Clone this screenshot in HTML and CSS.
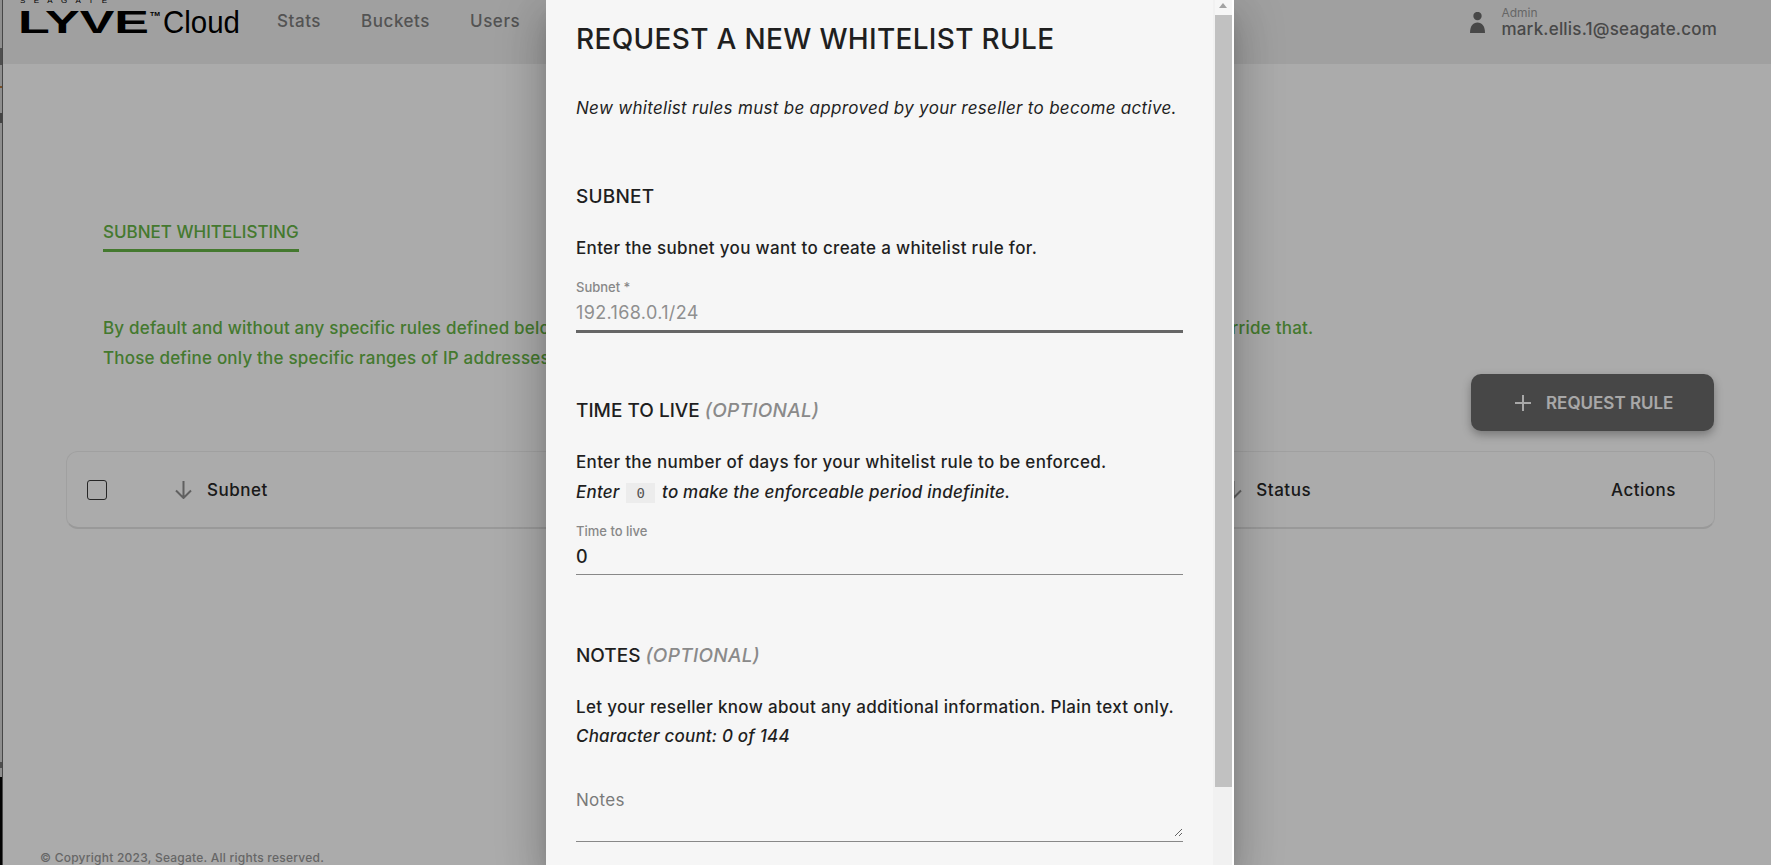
FILE: index.html
```html
<!DOCTYPE html>
<html lang="en">
<head>
<meta charset="utf-8">
<title>Lyve Cloud - Subnet whitelisting</title>
<link rel="stylesheet" href="styles.css">
</head>
<body>
<div class="edge"><div class="edge-top"></div><div class="edge-bottom"></div></div>
<div class="page">
  <header class="topbar">
    <svg class="logo" width="224" height="36" viewBox="0 0 224 36" aria-label="Seagate Lyve Cloud">
      <text class="logo-seagate" x="0" y="3" textLength="87" lengthAdjust="spacing">SEAGATE</text>
      <text class="logo-lyve" x="-2" y="33" textLength="131" lengthAdjust="spacingAndGlyphs">LYVE</text>
      <text class="logo-tm" x="130" y="16" textLength="10" lengthAdjust="spacingAndGlyphs">TM</text>
      <text class="logo-cloud" x="143" y="33" textLength="77" lengthAdjust="spacingAndGlyphs">Cloud</text>
    </svg>
    <nav class="nav">
      <a class="nav-item">Stats</a>
      <a class="nav-item">Buckets</a>
      <a class="nav-item">Users</a>
    </nav>
    <div class="user">
      <svg class="user-icon" width="15" height="21" viewBox="0 0 15 21"><circle cx="7.5" cy="4" r="4.2"/><path d="M0 21C0 14 3 10.500 7.500 10.500S15 14 15 21Z"/></svg>
      <div class="user-text">
        <div class="user-role">Admin</div>
        <div class="user-mail">mark.ellis.1@seagate.com</div>
      </div>
    </div>
  </header>
  <main class="content">
    <div class="tab">SUBNET WHITELISTING</div>
    <p class="intro">By default and without any specific rules defined below, all IP addresses are allowed to access your storage. Whitelist rules you add override that.<br>Those define only the specific ranges of IP addresses that can reach your buckets.</p>
    <div class="actions"><button class="request-btn" type="button"><svg class="plus" width="16" height="16" viewBox="0 0 16 16"><path d="M8 0V16M0 8H16"/></svg>REQUEST RULE</button></div>
    <div class="table">
      <span class="checkbox"></span>
      <svg class="sort" width="17" height="18" viewBox="0 0 17 18"><path d="M8.500 0V17M1 9.500L8.500 17L16 9.500"/></svg>
      <span class="th">Subnet</span>
      <svg class="sort sort-status" width="17" height="18" viewBox="0 0 17 18"><path d="M8.500 0V17M1 9.500L8.500 17L16 9.500"/></svg>
      <span class="th th-status">Status</span>
      <span class="th">Actions</span>
    </div>
  </main>
  <footer class="footer">© Copyright 2023, Seagate. All rights reserved.</footer>
</div>
<div class="overlay">
  <section class="modal">
    <div class="modal-body">
      <h1 class="modal-title">REQUEST A NEW WHITELIST RULE</h1>
      <p class="lead">New whitelist rules must be approved by your reseller to become active.</p>
      <h2 class="section section-first">SUBNET</h2>
      <p class="text">Enter the subnet you want to create a whitelist rule for.</p>
      <label class="field-label">Subnet *</label>
      <input class="field field-strong" type="text" placeholder="192.168.0.1/24">
      <h2 class="section">TIME TO LIVE <em class="optional">(OPTIONAL)</em></h2>
      <p class="text">Enter the number of days for your whitelist rule to be enforced.</p>
      <p class="text text-italic">Enter <code class="chip">0</code> to make the enforceable period indefinite.</p>
      <label class="field-label">Time to live</label>
      <input class="field" type="text" value="0">
      <h2 class="section section-notes">NOTES <em class="optional">(OPTIONAL)</em></h2>
      <p class="text">Let your reseller know about any additional information. Plain text only.</p>
      <p class="text text-italic text-count">Character count: 0 of 144</p>
      <div class="notes"><textarea class="notes-input" placeholder="Notes"></textarea></div>
    </div>
    <div class="scrollbar">
      <div class="scroll-up"></div>
      <div class="scroll-thumb"></div>
    </div>
  </section>
</div>
</body>
</html>
```
FILE: styles.css
```css
* { box-sizing: border-box; }
html, body { height: 100%; }
body {
  margin: 0;
  display: flex;
  height: 865px;
  overflow: hidden;
  background: #fff;
  color: #272727;
  font-family: Inter, "Noto Sans", sans-serif;
  font-size: 17px;
}
.edge {
  width: 3px;
  flex: none;
  display: flex;
  flex-direction: column;
  border-right: 1px solid #6b6b6b;
}
.edge-top {
  flex: 1;
  background:
    linear-gradient(#777, #777) 0 48px / 2px 17px no-repeat,
    linear-gradient(#b5793f, #b5793f) 0 86px / 2px 2px no-repeat,
    linear-gradient(#666, #666) 0 113px / 2px 10px no-repeat,
    linear-gradient(#777, #777) 0 762px / 2px 6px no-repeat,
    #d4d4d4;
}
.edge-bottom { height: 88px; background: #050505; }
.page {
  flex: 1;
  min-width: 0;
  display: flex;
  flex-direction: column;
  height: 865px;
}
.topbar {
  height: 64px;
  flex: none;
  display: flex;
  background: #efefef;
  padding-left: 17px;
  padding-right: 54px;
}
.logo { flex: none; overflow: visible; fill: #000; }
.logo-seagate { font: 400 8px "Liberation Sans", sans-serif; }
.logo-lyve { font: 700 32px "Liberation Sans", sans-serif; }
.logo-tm { font: 700 6px "Liberation Sans", sans-serif; }
.logo-cloud { font: 400 32px "Liberation Sans", sans-serif; }
.nav { display: flex; gap: 40px; margin-left: 33px; height: 42px; align-items: center; }
.nav-item { color: #7d7d7d; font-weight: 500; font-size: 17px; letter-spacing: .55px; }
.user { display: flex; margin-left: auto; }
.user-icon { fill: #6c6c6c; margin: 12px 16px 0 0; flex: none; }
.user-text { padding-top: 6px; }
.user-role { font-size: 12px; line-height: 13px; color: #999; }
.user-mail { font-size: 17px; line-height: 20px; font-weight: 500; color: #6c6c6c; letter-spacing: .2px; }
.content { display: flex; flex-direction: column; }
.tab {
  align-self: flex-start;
  margin: 156px 0 0 100px;
  padding-bottom: 5px;
  border-bottom: 3px solid #66b546;
  line-height: 24px;
  font-weight: 500;
  font-size: 17px;
  color: #66b546;
}
.intro {
  margin: 61px 0 0 100px;
  width: 1300px;
  line-height: 30px;
  font-weight: 500;
  font-size: 17px;
  letter-spacing: .2px;
  color: #66b546;
}
.actions { display: flex; justify-content: flex-end; margin: 1px 57px 0 0; }
.request-btn {
  width: 243px;
  height: 57px;
  display: flex;
  align-items: center;
  padding: 0 0 0 44px;
  gap: 15px;
  border: 0;
  border-radius: 10px;
  background: #6b6b6b;
  color: #fbfbfb;
  font: 600 17px Inter, sans-serif;
  box-shadow: 0 4px 10px rgba(0, 0, 0, .3);
}
.plus { stroke: #fbfbfb; stroke-width: 2; fill: none; flex: none; }
.table {
  margin: 20px 56px 0 63px;
  height: 78px;
  display: flex;
  align-items: center;
  padding: 0 38px 0 20px;
  border: 1px solid #efefef;
  border-bottom: 2px solid #e4e4e4;
  border-radius: 12px;
}
.checkbox {
  width: 20px;
  height: 20px;
  flex: none;
  border: 1px solid #3a3a3a;
  border-radius: 3px;
  margin-right: 68px;
}
.sort { stroke: #909090; stroke-width: 2; fill: none; flex: none; margin-right: 15px; }
.sort-status { margin-left: auto; margin-right: 14px; }
.th { font-weight: 500; font-size: 17px; letter-spacing: .5px; color: #272727; }
.th-status { margin-right: 300px; }
.footer {
  margin-top: auto;
  padding-left: 37px;
  line-height: 15px;
  font-size: 12px;
  letter-spacing: .24px;
  font-weight: 500;
  color: #999;
}
.overlay {
  position: absolute;
  inset: 0;
  background: rgba(0, 0, 0, .33);
  overflow: hidden;
}
.modal {
  margin-left: 546px;
  width: 688px;
  height: 865px;
  display: flex;
  background: #f6f6f6;
  box-shadow: 0 11px 15px -7px rgba(0, 0, 0, .2), 0 24px 38px 3px rgba(0, 0, 0, .14), 0 9px 46px 8px rgba(0, 0, 0, .12);
}
.modal-body {
  flex: 1;
  min-width: 0;
  padding: 22px 30px 0 30px;
  overflow: hidden;
  color: #1f1f1f;
}
.modal-title { margin: 0; font-size: 28px; line-height: 34px; font-weight: 500; letter-spacing: .32px; }
.lead { margin: 40px 0 0; font-size: 17px; line-height: 24px; font-style: italic; font-weight: 400; letter-spacing: .3px; }
.section { margin: 66px 0 -1px; font-size: 19px; line-height: 24px; font-weight: 500; }
.section-first { margin-top: 65px; letter-spacing: .2px; }
.section-notes { margin-top: 69px; }
.optional { font-weight: 500; color: #8a8a8a; letter-spacing: .3px; }
.text { margin: 25px 0 0; font-size: 17px; line-height: 30px; font-weight: 500; letter-spacing: .33px; }
.text-italic { margin-top: 0; font-style: italic; letter-spacing: .2px; }
.text-count { margin-top: -1px; }
.chip {
  display: inline-block;
  width: 29px;
  height: 20px;
  background: #ececec;
  color: #555;
  font: 400 14px/20px "DejaVu Sans Mono", monospace;
  text-align: center;
  margin: 0 2px;
}
.field-label { display: block; margin-top: 17px; font-size: 13px; line-height: 14px; font-weight: 500; color: #888; }
.field {
  display: block;
  width: 100%;
  height: 31px;
  margin-top: 6px;
  padding: 0 0 6px;
  border: 0;
  border-bottom: 1px solid #888;
  background: transparent;
  color: #1f1f1f;
  font: 500 18px/24px Inter, sans-serif;
  outline: 0;
}
.field::placeholder { color: #8f8f8f; opacity: 1; font-weight: 400; letter-spacing: .36px; }
.field-strong { height: 33px; border-bottom: 3px solid #666; }
.notes { margin-top: 37px; padding-bottom: 4px; border-bottom: 1px solid #888; }
.notes-input {
  display: block;
  width: 100%;
  height: 49px;
  padding: 0;
  border: 0;
  background: transparent;
  outline: 0;
  font: 400 17px/24px Inter, sans-serif;
  letter-spacing: .3px;
  resize: vertical;
}
.notes-input::placeholder { color: #7a7a7a; opacity: 1; }
.scrollbar {
  width: 21px;
  flex: none;
  display: flex;
  flex-direction: column;
  align-items: flex-end;
  background: #f1f1f1;
  border-right: 2px solid #fff;
}
.scroll-up {
  width: 17px;
  height: 15px;
  position: relative;
  background: #f6f6f6;
}
.scroll-up::after {
  content: "";
  position: absolute;
  left: 4px;
  top: 3px;
  border-left: 4.500px solid transparent;
  border-right: 4.500px solid transparent;
  border-bottom: 5px solid #a3a3a3;
}
.scroll-thumb { width: 17px; height: 772px; background: #c1c1c1; }
```
